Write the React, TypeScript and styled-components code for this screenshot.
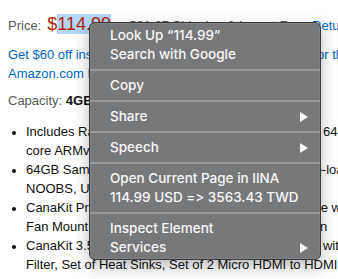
import React from 'react';
import styled, {createGlobalStyle} from 'styled-components';

const GlobalStyle = createGlobalStyle`
  html, body {
    margin: 0;
    padding: 0;
    background: #fff;
    overflow: hidden;
  }
`;

const Page = styled.div`
  position: relative;
  width: 338px;
  height: 279px;
  overflow: hidden;
  padding: 0 8px;
  box-sizing: border-box;
  font-family: 'Liberation Sans', Arial, sans-serif;
  font-size: 13px;
  line-height: 19px;
  color: #0f1111;
  white-space: nowrap;
`;

const PriceRow = styled.div`
  display: flex;
  align-items: baseline;
  height: 21px;
  padding-top: 14px;
  line-height: 21px;
`;

const Label = styled.span`
  color: #565959;
  margin-right: 6px;
`;

const Price = styled.span`
  color: #b12704;
  font-size: 18px;
`;

const Selected = styled.span`
  background: #b4d6fd;
`;

const Muted = styled.span`
  color: #565959;
  margin-left: 7px;
`;

const Link = styled.span`
  color: #0066c0;
`;

const Promo = styled.div`
  color: #0066c0;
  margin-top: 10px;
`;

const Capacity = styled.div`
  margin-top: 8px;
  color: #565959;

  b {
    color: #0f1111;
  }
`;

const Bullets = styled.ul`
  margin: 12px 0 0;
  padding: 0 0 0 18px;
`;

const Bullet = styled.li`
  &::marker {
    font-size: 12px;
  }
`;

const Menu = styled.div`
  position: absolute;
  left: 89px;
  top: 22px;
  width: 232px;
  box-sizing: border-box;
  padding: 3px 0 2px;
  background: #77787a;
  border: 1px solid #3a3a3c;
  border-radius: 6px;
  box-shadow: 0 6px 16px rgba(0, 0, 0, 0.28), inset 0 0 0 1px rgba(255, 255, 255, 0.08);
  font-family: Inter, 'Liberation Sans', sans-serif;
  font-size: 13.5px;
  font-weight: 500;
  font-feature-settings: 'calt' 0, 'liga' 0;
  color: #f7f7f7;
`;

const Item = styled.div`
  display: flex;
  align-items: center;
  justify-content: space-between;
  height: 19px;
  padding: 0 12px 0 20px;
`;

const Separator = styled.div`
  height: 2px;
  margin: 5px 0;
  background: #979899;
`;

const Arrow = () => (
  <svg width="8" height="10" viewBox="0 0 8 10">
    <polygon points="0,0 8,5 0,10" fill="#f7f7f7" />
  </svg>
);

const MenuItem = ({label, sub}: {label: string; sub?: boolean}) => (
  <Item>
    <span>{label}</span>
    {sub && <Arrow />}
  </Item>
);

export default function App() {
  return (
    <>
      <GlobalStyle />
      <Page>
        <PriceRow>
          <Label>Price:</Label>
          <Price>
            $<Selected>114.99</Selected>
          </Price>
          <Muted>
            + $21.67 Shipping &amp; Import Fees <Link>Returns</Link>
          </Muted>
        </PriceRow>
        <Promo>
          Get $60 off instantly: Pay only $54.99 upon approval for the
          <br />
          Amazon.com Rewards Visa Card. No annual fee.
        </Promo>
        <Capacity>
          Capacity: <b>4GB</b>
        </Capacity>
        <Bullets>
          <Bullet>
            Includes Raspberry Pi 4 4GB Model B with 1.5GHz 64-bit quad-
            <br />
            core ARMv8 CPU (4GB RAM)
          </Bullet>
          <Bullet>
            64GB Samsung EVO+ Micro SD Card Class 10 pre-loaded with
            <br />
            NOOBS, USB MicroSD Card Reader
          </Bullet>
          <Bullet>
            CanaKit Premium High-Gloss Raspberry Pi 4B Case with
            <br />
            Fan Mount, CanaKit Low Noise Bearing System Fan
          </Bullet>
          <Bullet>
            CanaKit 3.5A USB-C Raspberry Pi 4 Power Supply with Noise
            <br />
            Filter, Set of Heat Sinks, Set of 2 Micro HDMI to HDMI Cables
          </Bullet>
        </Bullets>
        <Menu>
          <MenuItem label="Look Up “114.99”" />
          <MenuItem label="Search with Google" />
          <Separator />
          <MenuItem label="Copy" />
          <Separator />
          <MenuItem label="Share" sub />
          <Separator />
          <MenuItem label="Speech" sub />
          <Separator />
          <MenuItem label="Open Current Page in IINA" />
          <MenuItem label="114.99 USD => 3563.43 TWD" />
          <Separator />
          <MenuItem label="Inspect Element" />
          <MenuItem label="Services" sub />
        </Menu>
      </Page>
    </>
  );
}
